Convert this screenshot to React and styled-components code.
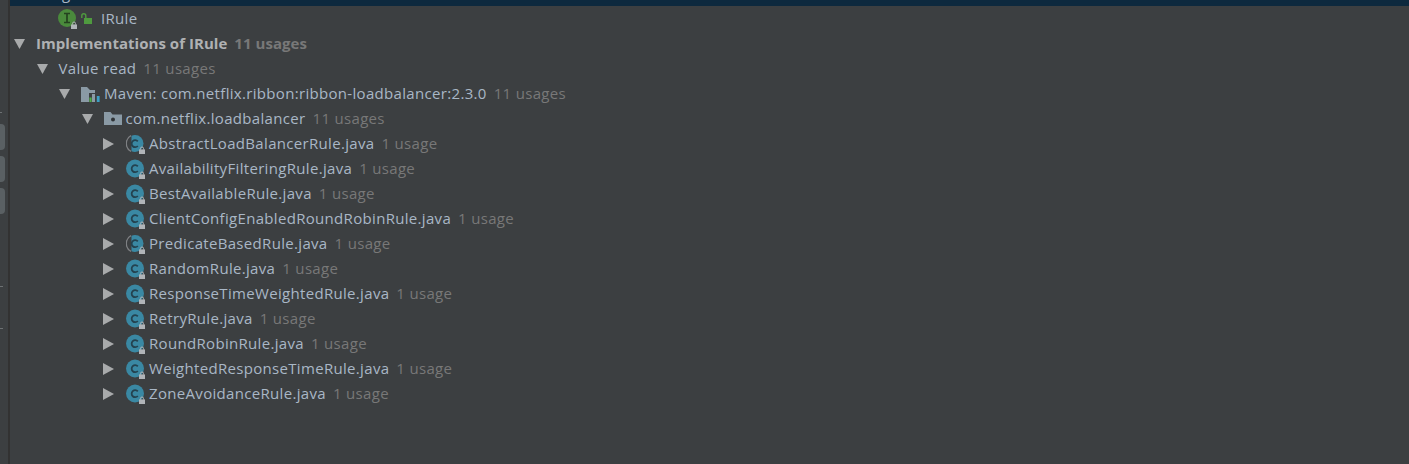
import React from "react";
import styled, { createGlobalStyle } from "styled-components";

const GlobalStyle = createGlobalStyle`
  html, body {
    margin: 0;
    padding: 0;
    background: #3c3f41;
  }
  body {
    font-family: "Open Sans", "Noto Sans", sans-serif;
  }
`;

const implementations = [
  { name: "AbstractLoadBalancerRule.java", abstract: true },
  { name: "AvailabilityFilteringRule.java" },
  { name: "BestAvailableRule.java" },
  { name: "ClientConfigEnabledRoundRobinRule.java" },
  { name: "PredicateBasedRule.java", abstract: true },
  { name: "RandomRule.java" },
  { name: "ResponseTimeWeightedRule.java" },
  { name: "RetryRule.java" },
  { name: "RoundRobinRule.java" },
  { name: "WeightedResponseTimeRule.java" },
  { name: "ZoneAvoidanceRule.java" },
];

function Arrow({ open }) {
  return (
    <ArrowBox>
      <svg width="12" height="12" viewBox="0 0 12 12">
        {open ? (
          <path d="M1 1H12L6.5 11Z" fill="#a8aaab" />
        ) : (
          <path d="M0 0L11 6L0 12Z" fill="#a8aaab" />
        )}
      </svg>
    </ArrowBox>
  );
}

function SmallLock() {
  return (
    <g>
      <path d="M14.5 16.5v-1a1.5 1.5 0 0 1 3 0v1" fill="none" stroke="#b0b4b8" strokeWidth="1" />
      <rect x="13" y="16.4" width="6" height="4.6" fill="#b0b4b8" />
    </g>
  );
}

function ClassIcon({ abstract }) {
  return (
    <IconBox>
      <svg width="21" height="21" viewBox="0 0 21 21">
        {abstract ? (
          <>
            <path d="M5 2.6A9 9 0 0 0 5 18.4" fill="none" stroke="#7f8184" strokeWidth="1.3" />
            <path d="M9 2a8.5 8.5 0 0 1 0 17a8.5 8.5 0 0 1 -3.5 -.8V2.8a8.5 8.5 0 0 1 3.5 -.8Z" fill="#3a88a3" />
          </>
        ) : (
          <circle cx="9" cy="10.5" r="9" fill="#3a88a3" />
        )}
        <path d="M11.8 8.4A3.5 3.5 0 1 0 11.8 13" fill="none" stroke="#24424f" strokeWidth="1.8" />
        <SmallLock />
      </svg>
    </IconBox>
  );
}

function InterfaceIcon() {
  return (
    <IconBox>
      <svg width="21" height="21" viewBox="0 0 21 21">
        <circle cx="9" cy="10" r="9" fill="#4a8a3c" />
        <path d="M6 5.5h6M9 5.5v9M6 14.5h6" fill="none" stroke="#24421f" strokeWidth="1.7" />
        <SmallLock />
      </svg>
    </IconBox>
  );
}

function OpenLock() {
  return (
    <LockBox>
      <svg width="12" height="12" viewBox="0 0 12 12">
        <path d="M.8 5V2.8a2 2 0 0 1 4 0V5" fill="none" stroke="#4f9a3f" strokeWidth="1.4" />
        <rect x="3" y="5" width="8" height="6" fill="#4f9a3f" />
      </svg>
    </LockBox>
  );
}

function MavenIcon() {
  return (
    <IconBox>
      <svg width="21" height="17" viewBox="0 0 21 17">
        <path d="M0 2h6l3 3h5v3H8v9H0Z" fill="#8a9aa5" />
        <rect x="8.4" y="12.5" width="2.2" height="4.5" fill="#4fae48" />
        <rect x="11" y="9" width="3" height="8" fill="#8a9aa5" />
        <rect x="15.8" y="11" width="2.8" height="6" fill="#3d9fc4" />
      </svg>
    </IconBox>
  );
}

function PackageIcon() {
  return (
    <IconBox $width={22}>
      <svg width="19" height="15" viewBox="0 0 19 15">
        <path d="M0 1h6.5l2 2.5H18V14H0Z" fill="#8a9aa5" />
        <circle cx="9" cy="8.5" r="2" fill="#2f3336" />
      </svg>
    </IconBox>
  );
}

export default function App() {
  return (
    <>
      <GlobalStyle />
      <Page>
        <Gutter>
          <Marker $top={112} $width={2} />
          <RailButton />
          <RailButton />
          <RailButton />
          <Marker $top={286} $width={3} />
          <Marker $top={328} $width={3} />
        </Gutter>
        <Tree>
          <SelectedRow>
            <HiddenLabel>g</HiddenLabel>
          </SelectedRow>
          <Row $depth={2}>
            <InterfaceIcon />
            <OpenLock />
            <Label>IRule</Label>
          </Row>
          <Row $depth={0}>
            <Arrow open />
            <GroupLabel>Implementations of IRule</GroupLabel>
            <BoldCount>11 usages</BoldCount>
          </Row>
          <Row $depth={1}>
            <Arrow open />
            <Label>Value read</Label>
            <Count>11 usages</Count>
          </Row>
          <Row $depth={2}>
            <Arrow open />
            <MavenIcon />
            <Label>Maven: com.netflix.ribbon:ribbon-loadbalancer:2.3.0</Label>
            <Count>11 usages</Count>
          </Row>
          <Row $depth={3}>
            <Arrow open />
            <PackageIcon />
            <Label>com.netflix.loadbalancer</Label>
            <Count>11 usages</Count>
          </Row>
          {implementations.map((item) => (
            <Row $depth={4} key={item.name}>
              <Arrow />
              <ClassIcon abstract={item.abstract} />
              <Label>{item.name}</Label>
              <Count>1 usage</Count>
            </Row>
          ))}
        </Tree>
      </Page>
    </>
  );
}

const Page = styled.div`
  display: flex;
  width: 1409px;
  height: 464px;
  overflow: hidden;
  background: #3c3f41;
`;

const Gutter = styled.div`
  position: relative;
  box-sizing: border-box;
  flex: 0 0 10px;
  display: flex;
  flex-direction: column;
  gap: 6px;
  padding-top: 124px;
  border-right: 2px solid #323232;
`;

const RailButton = styled.div`
  width: 5px;
  height: 26px;
  background: #5a6063;
  border-radius: 0 4px 4px 0;
`;

const Marker = styled.div`
  position: absolute;
  left: 0;
  top: ${(p) => p.$top}px;
  width: ${(p) => p.$width}px;
  height: 1px;
  background: #6d7173;
`;

const Tree = styled.div`
  flex: 1;
  display: flex;
  flex-direction: column;
  font-size: 15px;
  letter-spacing: 0.32px;
  color: #a9b7c6;
`;

const SelectedRow = styled.div`
  height: 6px;
  overflow: hidden;
  background: #0d293e;
  padding-left: 52px;
  display: flex;
  align-items: flex-end;
`;

const HiddenLabel = styled.span`
  line-height: 1;
  height: 3px;
  margin-bottom: 4px;
  transform: translateY(-13px);
  color: #a9b7c6;
`;

const Row = styled.div`
  display: flex;
  align-items: center;
  height: 25px;
  padding-left: ${(p) => 3 + p.$depth * 22.5}px;
  white-space: nowrap;
`;

const ArrowBox = styled.span`
  flex: 0 0 23px;
  display: flex;
  align-items: center;
  height: 100%;
`;

const IconBox = styled.span`
  flex: 0 0 ${(p) => p.$width || 23}px;
  display: flex;
  align-items: center;
`;

const LockBox = styled.span`
  flex: 0 0 20px;
  display: flex;
  align-items: center;
`;

const Label = styled.span`
  margin-bottom: 2px;
  color: #a9b7c6;
`;

const GroupLabel = styled.span`
  margin-bottom: 2px;
  color: #afb1b3;
  font-weight: 700;
  letter-spacing: 0.04px;
`;

const Count = styled.span`
  margin-left: 7px;
  margin-bottom: 2px;
  color: #787878;
`;

const BoldCount = styled(Count)`
  font-weight: 700;
  letter-spacing: 0.04px;
`;
